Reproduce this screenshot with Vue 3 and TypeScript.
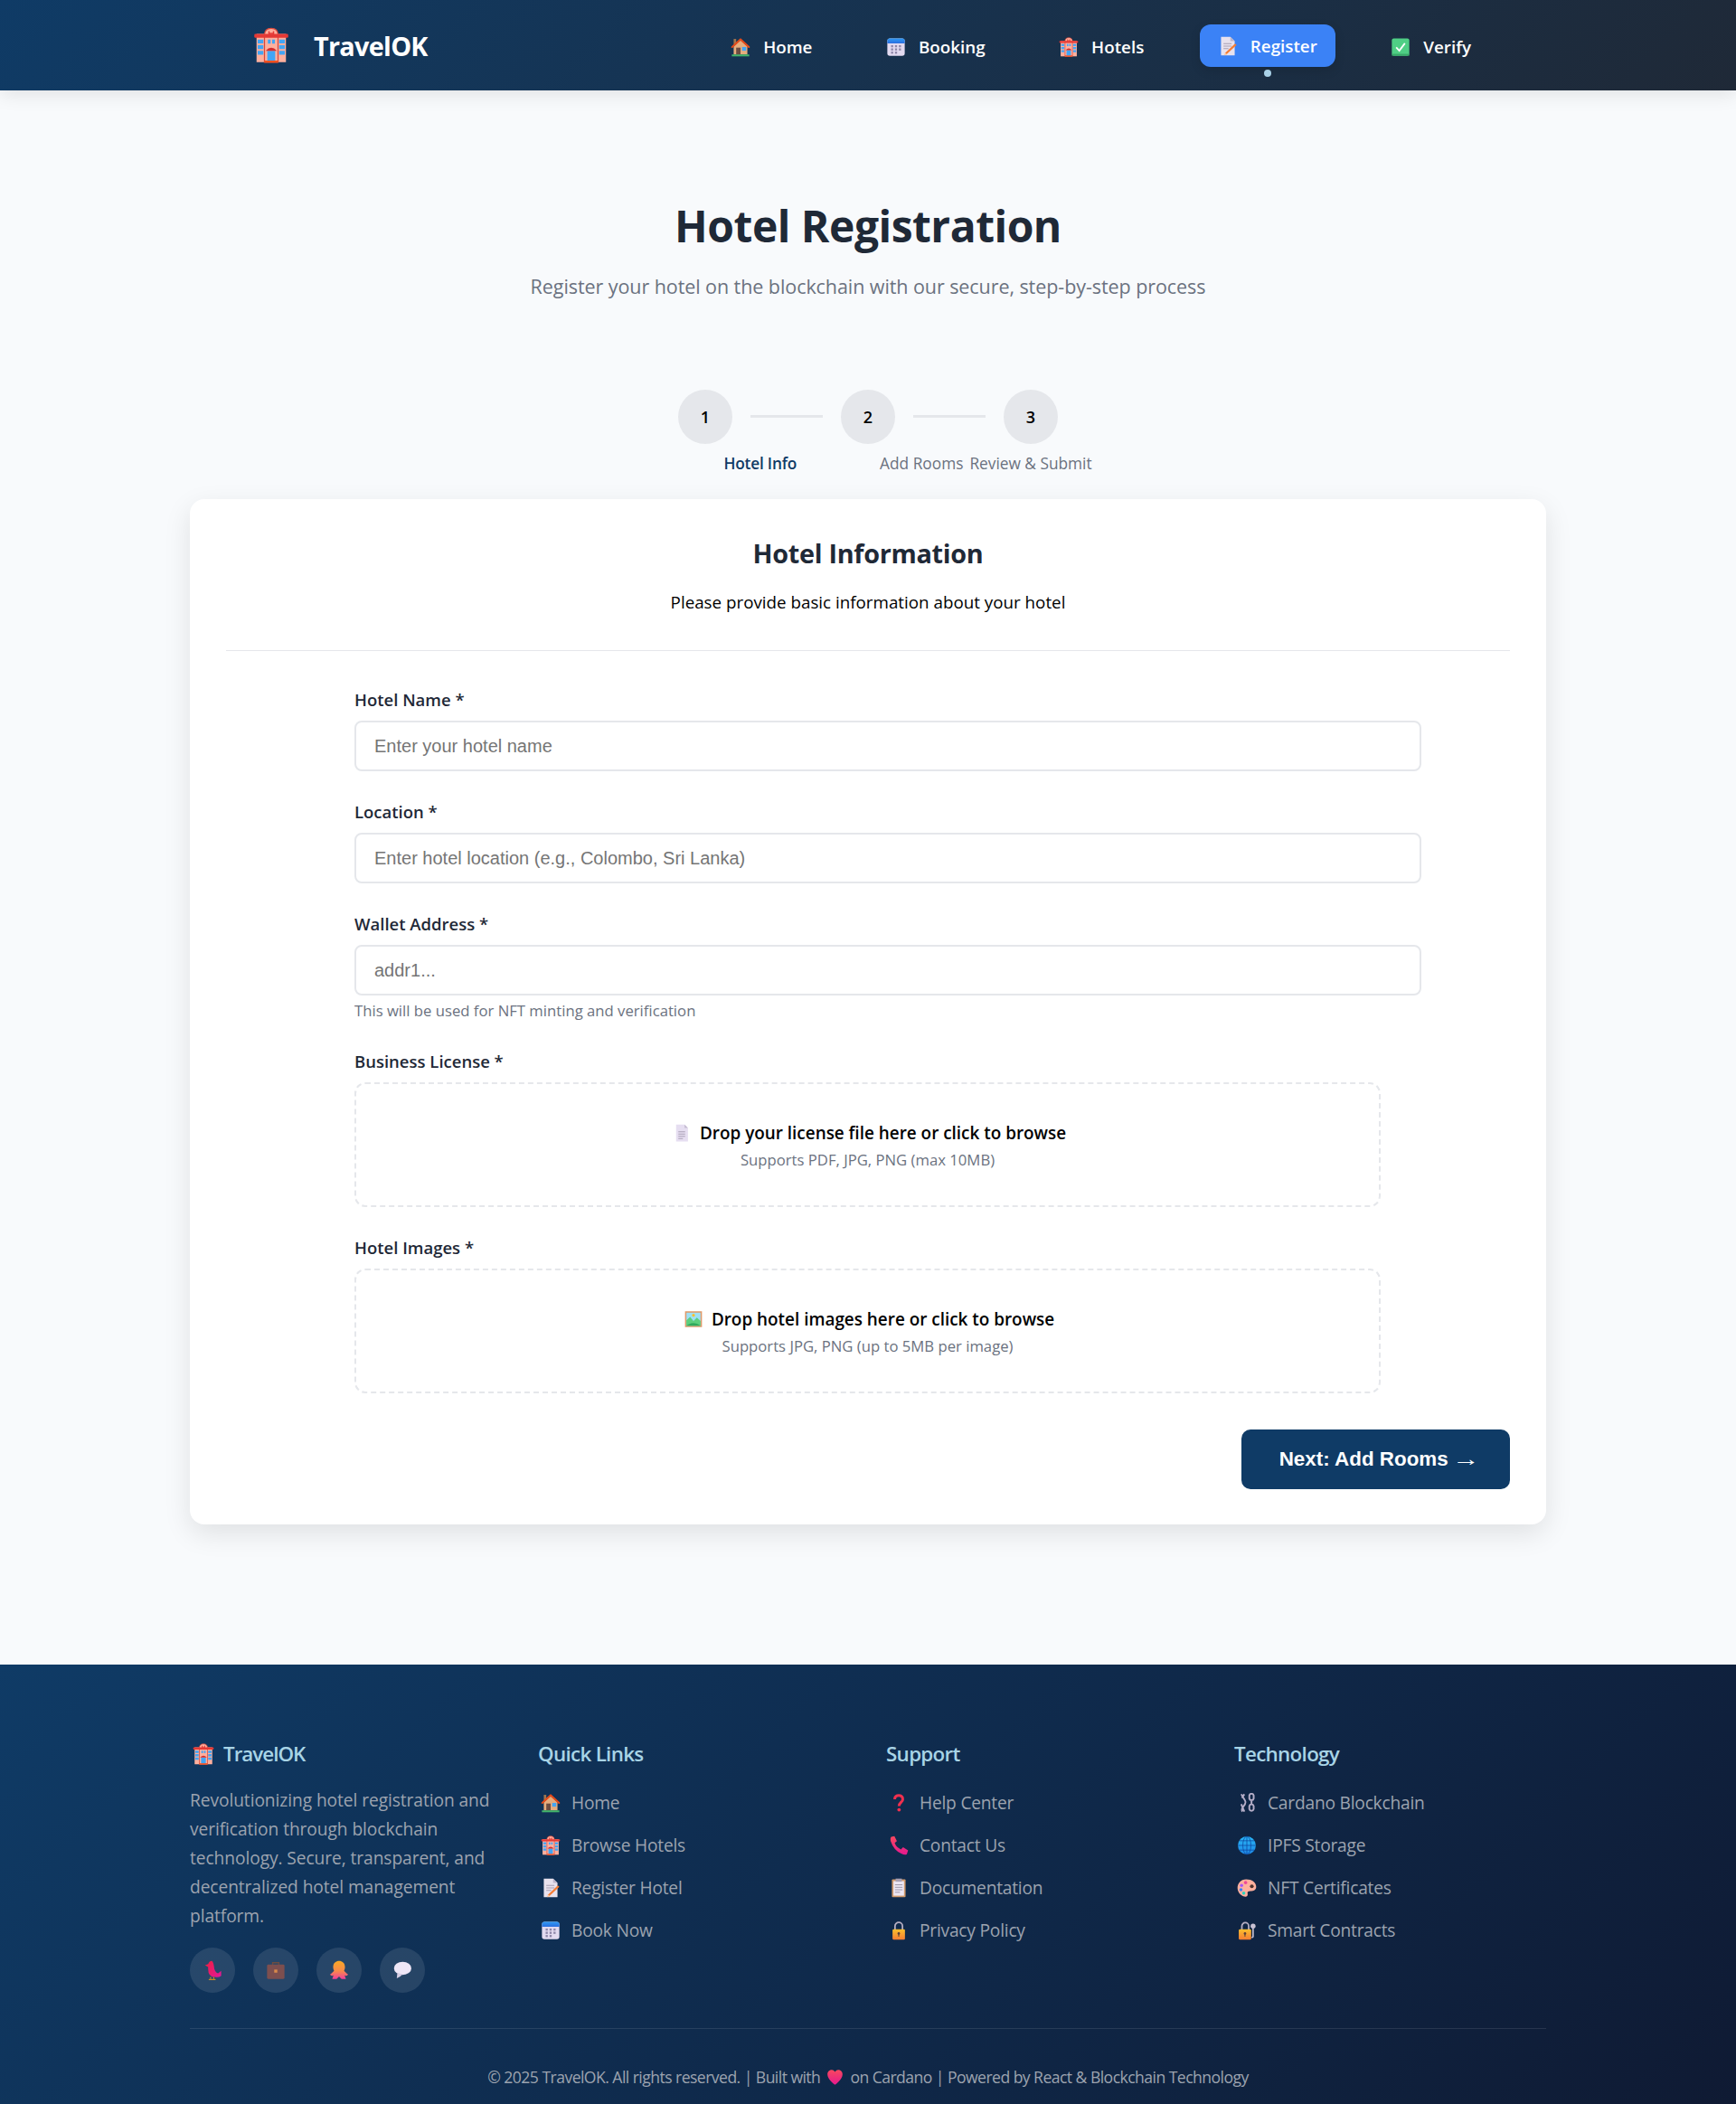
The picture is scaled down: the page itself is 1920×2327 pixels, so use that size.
<script setup lang="ts">
const navItems = [
  { icon: 'house', label: 'Home' },
  { icon: 'calendar', label: 'Booking' },
  { icon: 'hotel', label: 'Hotels' },
  { icon: 'memo', label: 'Register', active: true },
  { icon: 'check', label: 'Verify' }
]

const textFields = [
  { label: 'Hotel Name *', placeholder: 'Enter your hotel name' },
  { label: 'Location *', placeholder: 'Enter hotel location (e.g., Colombo, Sri Lanka)' },
  { label: 'Wallet Address *', placeholder: 'addr1...', hint: 'This will be used for NFT minting and verification' }
]

const dropZones = [
  { label: 'Business License *', icon: 'file', title: 'Drop your license file here or click to browse', sub: 'Supports PDF, JPG, PNG (max 10MB)' },
  { label: 'Hotel Images *', icon: 'picture', title: 'Drop hotel images here or click to browse', sub: 'Supports JPG, PNG (up to 5MB per image)' }
]

const footerCols = [
  {
    title: 'Quick Links',
    links: [
      { icon: 'house', label: 'Home' },
      { icon: 'hotel', label: 'Browse Hotels' },
      { icon: 'memo', label: 'Register Hotel' },
      { icon: 'calendar', label: 'Book Now' }
    ]
  },
  {
    title: 'Support',
    links: [
      { icon: 'question', label: 'Help Center' },
      { icon: 'phone', label: 'Contact Us' },
      { icon: 'clipboard', label: 'Documentation' },
      { icon: 'lock', label: 'Privacy Policy' }
    ]
  },
  {
    title: 'Technology',
    links: [
      { icon: 'chain', label: 'Cardano Blockchain' },
      { icon: 'globe', label: 'IPFS Storage' },
      { icon: 'palette', label: 'NFT Certificates' },
      { icon: 'lockkey', label: 'Smart Contracts' }
    ]
  }
]

const socials = ['bird', 'briefcase', 'octopus', 'bubble']
</script>

<template>
  <div class="page">
    <svg class="sprite" aria-hidden="true">
      <defs>
        <linearGradient id="g-cal" x1="0" y1="0" x2="0" y2="1"><stop offset="0" stop-color="#2f9bf5"/><stop offset="1" stop-color="#2a6fe0"/></linearGradient>
        <linearGradient id="g-bird" x1="0" y1="0" x2="1" y2="1"><stop offset="0" stop-color="#ef1f3f"/><stop offset="1" stop-color="#e0189a"/></linearGradient>
        <linearGradient id="g-oct" x1="0" y1="0" x2="0" y2="1"><stop offset="0" stop-color="#f9a825"/><stop offset="0.55" stop-color="#f88a4a"/><stop offset="1" stop-color="#f0409a"/></linearGradient>
        <linearGradient id="g-lock" x1="0" y1="0" x2="0" y2="1"><stop offset="0" stop-color="#fbc02d"/><stop offset="1" stop-color="#f57c33"/></linearGradient>
        <linearGradient id="g-heart" x1="0" y1="0" x2="0" y2="1"><stop offset="0" stop-color="#f8485e"/><stop offset="1" stop-color="#e5198f"/></linearGradient>
        <linearGradient id="g-globe" x1="0" y1="0" x2="0" y2="1"><stop offset="0" stop-color="#29b6f6"/><stop offset="1" stop-color="#1e88e5"/></linearGradient>
      </defs>
      <symbol id="hotel" viewBox="0 0 32 32">
        <rect x="3" y="6" width="26" height="25" fill="#ffb09e"/>
        <path d="M10 7 Q10 1 16 1 Q22 1 22 7 V31 H10 Z" fill="#ffb09e" stroke="#d9483b" stroke-width="1"/>
        <rect x="1" y="6" width="30" height="3.4" rx="1" fill="#e53935"/>
        <path d="M14 3.5 V8 M18 3.5 V8 M14 5.6 H18" stroke="#e53935" stroke-width="1.2" fill="none"/>
        <g fill="#42a5f5">
          <rect x="4" y="11" width="5" height="3.4"/><rect x="23" y="11" width="5" height="3.4"/>
          <rect x="4" y="16" width="5" height="3.4"/><rect x="23" y="16" width="5" height="3.4"/>
          <rect x="4" y="21" width="5" height="3.4"/><rect x="23" y="21" width="5" height="3.4"/>
          <rect x="13" y="11" width="2.4" height="3.6"/><rect x="16.8" y="11" width="2.4" height="3.6"/>
          <rect x="12.5" y="21" width="7" height="9"/>
        </g>
        <path d="M11 21 Q16 15.5 21 21 Z" fill="#d32f2f"/>
        <rect x="10" y="29.6" width="12" height="1.8" fill="#f4511e"/>
      </symbol>
      <symbol id="house" viewBox="0 0 32 32">
        <rect x="5" y="3" width="4" height="9" fill="#a1754f"/>
        <path d="M5 15 L16 5 L27 15 V28 H5 Z" fill="#e6ad7e"/>
        <rect x="9" y="17" width="7" height="11" fill="#6d4c41"/>
        <rect x="18.5" y="16" width="6.5" height="6" fill="#42a5f5"/>
        <path d="M2.5 16 L16 3.5 L29.5 16" fill="none" stroke="#e64a19" stroke-width="3" stroke-linejoin="round" stroke-linecap="round"/>
        <rect x="2" y="28" width="28" height="3" fill="#43b66b"/>
      </symbol>
      <symbol id="calendar" viewBox="0 0 32 32">
        <rect x="2" y="2" width="28" height="28" rx="4" fill="#e2daf0"/>
        <path d="M2 10 V6 a4 4 0 0 1 4 -4 H26 a4 4 0 0 1 4 4 V10 Z" fill="url(#g-cal)"/>
        <g fill="#8d86a8">
          <rect x="8" y="13" width="3.4" height="3.4"/><rect x="14.3" y="13" width="3.4" height="3.4"/><rect x="20.6" y="13" width="3.4" height="3.4"/>
          <rect x="8" y="18.2" width="3.4" height="3.4"/><rect x="14.3" y="18.2" width="3.4" height="3.4"/><rect x="20.6" y="18.2" width="3.4" height="3.4"/>
          <rect x="8" y="23.4" width="3.4" height="3.4"/><rect x="14.3" y="23.4" width="3.4" height="3.4"/>
        </g>
      </symbol>
      <symbol id="memo" viewBox="0 0 32 32">
        <path d="M5 1 H20 L27 8 V31 H5 Z" fill="#e8e2ee"/>
        <path d="M20 1 L27 8 H20 Z" fill="#bdb5c9"/>
        <path d="M9 12 H22 M9 16 H22 M9 20 H17" stroke="#a79fb3" stroke-width="1.6" fill="none"/>
        <path d="M29 14 L13 29 L10 31 L10.8 27 L26.5 12 Z" fill="#f57c33" transform="translate(1 0)"/>
        <path d="M10 31 L10.8 27 L14 29.5 Z" fill="#ffd0a8" transform="translate(1 0)"/>
      </symbol>
      <symbol id="check" viewBox="0 0 32 32">
        <rect x="2" y="2" width="28" height="28" rx="3" fill="#4fcf85"/>
        <rect x="2" y="27" width="28" height="3" fill="#3aa96a"/>
        <path d="M9 16.5 L14 22 L23 10" fill="none" stroke="#fff" stroke-width="2.6"/>
      </symbol>
      <symbol id="file" viewBox="0 0 32 32">
        <path d="M6 1 H21 L27 7 V31 H6 Z" fill="#e6def1"/>
        <path d="M21 1 L27 7 H21 Z" fill="#c4bcd1"/>
        <path d="M10 14 H22 M10 18 H22 M10 22 H22 M10 26 H18" stroke="#a79fb3" stroke-width="1.5" fill="none"/>
      </symbol>
      <symbol id="picture" viewBox="0 0 32 32">
        <rect x="1" y="2" width="30" height="28" fill="#e09a6a"/>
        <rect x="3.5" y="4.5" width="25" height="23" fill="#9fe0f5"/>
        <circle cx="16" cy="9" r="2.6" fill="#fbc02d"/>
        <path d="M3.5 18 L10 12 L16 19 L22 13 L28.5 19 V27.5 H3.5 Z" fill="#5ccf7d"/>
        <path d="M3.5 27.5 Q16 18 28.5 27.5 Z" fill="#2faa5c"/>
      </symbol>
      <symbol id="question" viewBox="0 0 32 32">
        <path d="M9.5 10 C9.5 2 22.5 2 22.5 10 C22.5 15 16.5 15.5 16.5 21" fill="none" stroke="#f0304f" stroke-width="4.4"/>
        <circle cx="16.5" cy="27" r="2.8" fill="#f0304f"/>
      </symbol>
      <symbol id="phone" viewBox="0 0 32 32">
        <path d="M4 2 L9 1 L13 9 L9.5 12 Q12 19 19.5 22.5 L23 19 L31 24 L29 30 Q26 32 20 29 Q8 24 3 9 Q2 4 4 2 Z" fill="url(#g-heart)"/>
      </symbol>
      <symbol id="clipboard" viewBox="0 0 32 32">
        <rect x="5" y="2" width="22" height="29" rx="1.5" fill="#d19a6b"/>
        <rect x="7.5" y="5" width="17" height="23.5" fill="#ece6f3"/>
        <rect x="11" y="1" width="10" height="5" fill="#a79fb3"/>
        <path d="M10 11 H22 M10 15 H22 M10 19 H22 M10 23 H18" stroke="#9a93a8" stroke-width="1.4" fill="none"/>
      </symbol>
      <symbol id="lock" viewBox="0 0 32 32">
        <path d="M10 15 V9 a6 6 0 0 1 12 0 V15" fill="none" stroke="#b5aec2" stroke-width="2.6"/>
        <rect x="6" y="14" width="20" height="17" rx="2" fill="url(#g-lock)"/>
        <circle cx="16" cy="21" r="2" fill="#5d4037"/>
        <rect x="15.2" y="21" width="1.6" height="5" fill="#5d4037"/>
      </symbol>
      <symbol id="lockkey" viewBox="0 0 32 32">
        <path d="M8 15 V9 a5.5 5.5 0 0 1 11 0 V15" fill="none" stroke="#b5aec2" stroke-width="2.6"/>
        <rect x="3" y="14" width="20" height="17" rx="2" fill="url(#g-lock)"/>
        <circle cx="13" cy="21" r="2" fill="#5d4037"/>
        <rect x="12.2" y="21" width="1.6" height="5" fill="#5d4037"/>
        <circle cx="26" cy="9" r="4" fill="#c9c2d3"/>
        <path d="M26 12 V26 L24 28" fill="none" stroke="#c9c2d3" stroke-width="2.4"/>
      </symbol>
      <symbol id="chain" viewBox="0 0 32 32">
        <g fill="none" stroke="#b5aec8" stroke-width="2.8">
          <path d="M7 2 L13 12 Q15 15 13 18 L9 24 Q7 28 9 30 M12 2 L8 8 M7 18 L12 30"/>
          <path d="M20 4 a3.6 3.6 0 0 1 7 0 V9 a3.6 3.6 0 0 1 -7 0 Z M20 21 a3.6 3.6 0 0 1 7 0 V26 a3.6 3.6 0 0 1 -7 0 Z M23.5 12 V19"/>
        </g>
      </symbol>
      <symbol id="globe" viewBox="0 0 32 32">
        <circle cx="16" cy="16" r="14.5" fill="url(#g-globe)"/>
        <g fill="none" stroke="#0d47a1" stroke-width="1.1">
          <ellipse cx="16" cy="16" rx="6.5" ry="14.5"/>
          <path d="M16 1.5 V30.5 M1.5 16 H30.5 M4 8.5 H28 M4 23.5 H28"/>
        </g>
      </symbol>
      <symbol id="palette" viewBox="0 0 32 32">
        <path d="M15 2 C6 2 1 9 1 16 C1 24 8 30 14 30 C18 30 17.5 26 17 24 C16.6 22 19 21 22 21 C27 21 31 19 31 14 C31 7 24 2 15 2 Z" fill="#ffb09e"/>
        <circle cx="24" cy="13.5" r="3" fill="#4e342e"/>
        <circle cx="14" cy="7.5" r="2.6" fill="#ec4899"/>
        <circle cx="7.5" cy="12" r="2.6" fill="#a855f7"/>
        <circle cx="6.5" cy="19" r="2.6" fill="#3b82f6"/>
        <circle cx="11" cy="24.5" r="2.6" fill="#2dd4bf"/>
      </symbol>
      <symbol id="bird" viewBox="0 0 32 32">
        <path d="M4 8 L9 6 Q11 1 15 1 Q18 3 19 14 Q21 20 25 21 L30 17 V25 Q26 28 20 27 Q9 27 9 14 L9 11 Z" fill="url(#g-bird)"/>
        <path d="M13 27 V30 M18 27 V30 M10 31 H21" stroke="#f59e0b" stroke-width="1.4" fill="none"/>
      </symbol>
      <symbol id="briefcase" viewBox="0 0 32 32">
        <path d="M11 8 V4 H21 V8" fill="none" stroke="#6d4c41" stroke-width="2"/>
        <rect x="2" y="7" width="28" height="23" rx="2" fill="#7d4f4f"/>
        <rect x="13.5" y="15" width="5" height="5" fill="#d98a4b"/>
      </symbol>
      <symbol id="octopus" viewBox="0 0 32 32">
        <path d="M6.5 11 C6.5 -2 25.5 -2 25.5 11 C25.5 14 24.5 16 24 17 Q29 22 30.5 23 Q29 26 25 24.5 L27 30 H20 L16 26 L12 30 H5 L7 24.5 Q3 26 1.5 23 Q3 22 8 17 C7.5 16 6.5 14 6.5 11 Z" fill="url(#g-oct)"/>
      </symbol>
      <symbol id="bubble" viewBox="0 0 32 32">
        <ellipse cx="16.5" cy="13" rx="14" ry="10.5" fill="#efe7f7"/>
        <path d="M8 20 L7 29 Q13 27 16 23 Z" fill="#d8cfe6"/>
        <path d="M4 18 Q16 28 29 17 Q22 24 12 23 Z" fill="#cfc5e0"/>
      </symbol>
      <symbol id="heart" viewBox="0 0 32 32">
        <path d="M16 30 C6 22 2 16 2 10 C2 5 6 2 10 2 C13 2 15 4 16 6 C17 4 19 2 22 2 C26 2 30 5 30 10 C30 16 26 22 16 30 Z" fill="url(#g-heart)"/>
      </symbol>
    </svg>

    <header class="header">
      <div class="brand">
        <svg class="brand-icon"><use href="#hotel"/></svg>
        <span class="brand-name">TravelOK</span>
      </div>
      <nav class="nav">
        <a v-for="item in navItems" :key="item.label" class="nav-link" :class="{ active: item.active }">
          <svg class="nav-icon"><use :href="'#' + item.icon"/></svg>
          <span>{{ item.label }}</span>
        </a>
      </nav>
    </header>

    <main class="main">
      <h1 class="title">Hotel Registration</h1>
      <p class="subtitle">Register your hotel on the blockchain with our secure, step-by-step process</p>

      <div class="steps">
        <div class="step">1</div>
        <div class="step-line"></div>
        <div class="step">2</div>
        <div class="step-line"></div>
        <div class="step">3</div>
      </div>
      <div class="step-labels">
        <span class="current">Hotel Info</span>
        <span>Add Rooms</span>
        <span>Review &amp; Submit</span>
      </div>

      <section class="card">
        <div class="card-head">
          <h2>Hotel Information</h2>
          <p>Please provide basic information about your hotel</p>
        </div>

        <form class="form" @submit.prevent>
          <div v-for="field in textFields" :key="field.label" class="group">
            <label>{{ field.label }}</label>
            <input type="text" :placeholder="field.placeholder" />
            <small v-if="field.hint">{{ field.hint }}</small>
          </div>
          <div v-for="zone in dropZones" :key="zone.label" class="group">
            <label>{{ zone.label }}</label>
            <div class="drop">
              <div class="drop-title">
                <svg class="drop-icon"><use :href="'#' + zone.icon"/></svg>
                <span>{{ zone.title }}</span>
              </div>
              <div class="drop-sub">{{ zone.sub }}</div>
            </div>
          </div>
        </form>

        <div class="actions">
          <button type="button" class="next">Next: Add Rooms <span class="arrow">→</span></button>
        </div>
      </section>
    </main>

    <footer class="footer">
      <div class="footer-grid">
        <div>
          <h3 class="footer-brand"><svg class="footer-brand-icon"><use href="#hotel"/></svg>TravelOK</h3>
          <p class="about">Revolutionizing hotel registration and verification through blockchain technology. Secure, transparent, and decentralized hotel management platform.</p>
          <div class="socials">
            <span v-for="s in socials" :key="s" class="social">
              <svg><use :href="'#' + s"/></svg>
            </span>
          </div>
        </div>
        <div v-for="col in footerCols" :key="col.title">
          <h3>{{ col.title }}</h3>
          <ul>
            <li v-for="link in col.links" :key="link.label">
              <svg><use :href="'#' + link.icon"/></svg>
              <span>{{ link.label }}</span>
            </li>
          </ul>
        </div>
      </div>
      <div class="copyright">
        © 2025 TravelOK. All rights reserved. | Built with
        <svg class="heart"><use href="#heart"/></svg>
        on Cardano | Powered by React &amp; Blockchain Technology
      </div>
    </footer>
  </div>
</template>

<style scoped>
.page {
  font-family: "Open Sans", "Noto Sans", sans-serif;
  background: #f8fafc;
  color: #1f2937;
}
.sprite {
  position: absolute;
  width: 0;
  height: 0;
}
.header {
  height: 100px;
  box-sizing: border-box;
  padding: 0 273px 0 280px;
  display: flex;
  align-items: center;
  justify-content: space-between;
  background: linear-gradient(135deg, #0f3b66 0%, #1f2937 100%);
  box-shadow: 0 4px 20px rgba(0, 0, 0, 0.1);
  position: relative;
}
.brand {
  display: flex;
  align-items: center;
  gap: 27px;
}
.brand-icon {
  width: 40px;
  height: 40px;
}
.brand-name {
  color: #fff;
  font-size: 28.8px;
  font-weight: 700;
  letter-spacing: -0.7px;
}
.nav {
  display: flex;
  gap: 41.5px;
  align-items: center;
}
.nav-link {
  position: relative;
  display: flex;
  align-items: center;
  gap: 14px;
  height: 47px;
  padding: 0 20px;
  border-radius: 12px;
  color: #fff;
  font-size: 18.8px;
  font-weight: 600;
  margin-top: 4px;
}
.nav-link.active {
  background: #3b82f6;
  margin-top: 1px;
  box-shadow: 0 4px 12px rgba(0, 0, 0, 0.12);
}
.nav-link.active::after {
  content: "";
  position: absolute;
  left: 50%;
  bottom: -11px;
  width: 8px;
  height: 8px;
  margin-left: -4px;
  border-radius: 50%;
  background: #a8d0e6;
}
.nav-icon {
  width: 22px;
  height: 22px;
}
.main {
  padding: 0 210px 155px;
}
.title {
  margin: 0;
  padding-top: 121px;
  text-align: center;
  font-size: 48px;
  line-height: 58px;
  font-weight: 700;
  letter-spacing: -0.5px;
  color: #1f2937;
}
.subtitle {
  margin: 24px 0 0;
  text-align: center;
  font-size: 21.5px;
  line-height: 28px;
  letter-spacing: -0.07px;
  color: #6b7280;
}
.steps {
  margin-top: 100px;
  display: flex;
  justify-content: center;
  align-items: center;
  gap: 20px;
}
.step {
  width: 60px;
  height: 60px;
  border-radius: 50%;
  background: #e5e7eb;
  color: #000;
  font-size: 18px;
  font-weight: 600;
  display: flex;
  align-items: center;
  justify-content: center;
}
.step-line {
  width: 80px;
  height: 3px;
  margin-top: -2px;
  background: #e5e7eb;
}
.step-labels {
  margin-top: 11px;
  padding-left: 88px;
  display: flex;
  justify-content: center;
  gap: 7px;
  font-size: 17.3px;
  line-height: 22px;
  font-weight: 500;
  color: #6b7280;
}
.step-labels .current {
  color: #0f3b66;
  margin-right: 85px;
  font-weight: 600;
  letter-spacing: -0.2px;
}
.card {
  margin-top: 28px;
  background: #fff;
  border-radius: 16px;
  box-shadow: 0 10px 30px rgba(0, 0, 0, 0.1);
  padding: 41px 40px 39px;
}
.card-head {
  text-align: center;
  padding-bottom: 41px;
  border-bottom: 1px solid #e5e7eb;
}
.card-head h2 {
  margin: 0;
  font-size: 28.8px;
  line-height: 38px;
  font-weight: 700;
  letter-spacing: -0.3px;
}
.card-head p {
  margin: 23px 0 0;
  font-size: 18.8px;
  line-height: 24px;
  color: #000;
}
.form {
  margin: 41px 98px 0 142px;
}
.group {
  margin-bottom: 32px;
}
.group label {
  display: block;
  margin-bottom: 11px;
  padding-top: 1px;
  font-size: 18.5px;
  line-height: 24px;
  font-weight: 600;
}
.group input {
  display: block;
  width: 100%;
  height: 56px;
  box-sizing: border-box;
  padding: 0 20px;
  border: 2px solid #e5e7eb;
  border-radius: 8px;
  background: #fff;
  font-family: "Liberation Sans", Arial, sans-serif;
  font-size: 20px;
  outline: none;
}
.group input::placeholder {
  color: #757575;
}
.group small {
  display: block;
  margin-top: 7px;
  padding-bottom: 1px;
  font-size: 16.7px;
  line-height: 20px;
  color: #6b7280;
}
.drop {
  width: 1135px;
  height: 138px;
  box-sizing: border-box;
  padding-top: 2px;
  border: 2px dashed #e5e7eb;
  border-radius: 12px;
  display: flex;
  flex-direction: column;
  align-items: center;
  justify-content: center;
  gap: 7px;
}
.drop-title {
  display: flex;
  align-items: center;
  gap: 10px;
  margin-left: 4px;
  color: #000;
  font-size: 18.9px;
  line-height: 24px;
  font-weight: 600;
}
.drop-icon {
  width: 20px;
  height: 20px;
}
.drop-sub {
  font-size: 16.7px;
  line-height: 22px;
  color: #6b7280;
}
.actions {
  margin-top: 40px;
  display: flex;
  justify-content: flex-end;
}
.next {
  width: 297px;
  height: 66px;
  border: none;
  border-radius: 10px;
  background: #0f3b66;
  color: #fff;
  font-family: "Liberation Sans", Arial, sans-serif;
  font-size: 22.4px;
  font-weight: 700;
}
.arrow {
  display: inline-block;
  font-family: "Liberation Serif", serif;
  font-weight: 400;
  transform: scaleX(1.35);
  transform-origin: left center;
  margin-left: -2px;
}
.footer {
  height: 486px;
  box-sizing: border-box;
  padding: 84px 210px 0;
  background: linear-gradient(135deg, #0f3b66 0%, #0f1a33 100%);
  color: #9ca3af;
}
.footer-grid {
  display: grid;
  grid-template-columns: repeat(4, 1fr);
  gap: 40px;
  padding-bottom: 39px;
  border-bottom: 1px solid rgba(255, 255, 255, 0.1);
}
.footer h3 {
  margin: 0;
  font-size: 22.4px;
  line-height: 30px;
  font-weight: 600;
  letter-spacing: -0.7px;
  color: #a8d4e6;
}
.footer h3.footer-brand {
  display: flex;
  align-items: center;
  gap: 10px;
  letter-spacing: -1px;
}
.footer-brand-icon {
  width: 24px;
  height: 24px;
  margin-left: 3px;
}
.about {
  margin: 20px 0 0;
  font-size: 19.2px;
  line-height: 32px;
  letter-spacing: -0.08px;
}
.socials {
  margin-top: 19px;
  display: flex;
  gap: 20px;
}
.social {
  width: 50px;
  height: 50px;
  border-radius: 50%;
  background: rgba(255, 255, 255, 0.1);
  display: flex;
  align-items: center;
  justify-content: center;
}
.social svg {
  width: 22px;
  height: 22px;
}
.footer ul {
  list-style: none;
  margin: 25px 0 0;
  padding: 0;
}
.footer li {
  display: flex;
  align-items: center;
  gap: 12px;
  height: 27px;
  margin-bottom: 20px;
  font-size: 19.2px;
  letter-spacing: -0.22px;
}
.footer li svg {
  width: 22px;
  height: 22px;
  margin-left: 3px;
}
.copyright {
  margin-top: 41px;
  display: flex;
  justify-content: center;
  align-items: center;
  font-size: 17.6px;
  line-height: 24px;
  letter-spacing: -0.55px;
  white-space: pre;
}
.heart {
  width: 19px;
  height: 19px;
  margin: 0 3px;
}
</style>
